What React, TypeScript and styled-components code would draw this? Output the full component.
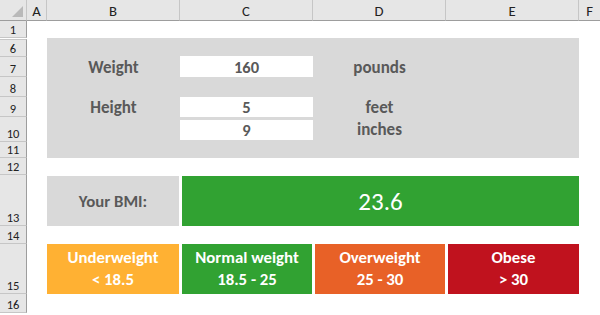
import React from "react";
import styled, { createGlobalStyle } from "styled-components";

const GlobalStyle = createGlobalStyle`
  html, body {
    margin: 0;
    padding: 0;
    background: #ffffff;
  }
  body {
    font-family: "Carlito", "Lato", "Liberation Sans", sans-serif;
  }
`;

const ROWS = [21, 17, 19, 20, 20, 20, 25, 16, 17, 51, 18, 50, 19];

const Sheet = styled.div`
  display: grid;
  grid-template-columns: 27px 20px 133px 133px 133px 133px 1fr;
  grid-template-rows: ${ROWS.map((r) => `${r}px`).join(" ")} 1fr;
  width: 600px;
  height: 315px;
  overflow: hidden;
  background: #ffffff;
`;

const Corner = styled.div`
  position: relative;
  grid-column: 1;
  grid-row: 1;
  background: #e6e6e6;
  border-right: 1px solid #c6c6c6;
  border-bottom: 1px solid #9d9d9d;

  &::after {
    content: "";
    position: absolute;
    right: 3px;
    bottom: 3px;
    width: 0;
    height: 0;
    border-left: 11px solid transparent;
    border-bottom: 11px solid #b9b9b9;
  }
`;

const ColHead = styled.div<{ $col: number; $last?: boolean }>`
  grid-column: ${(p) => p.$col};
  grid-row: 1;
  display: flex;
  align-items: center;
  justify-content: center;
  background: #e6e6e6;
  border-right: ${(p) => (p.$last ? "none" : "1px solid #c6c6c6")};
  border-bottom: 1px solid #9d9d9d;
  font-size: 14.7px;
  color: #222222;
  padding-top: 1px;
`;

const RowHead = styled.div<{ $row: number; $hidden?: boolean }>`
  grid-column: 1;
  grid-row: ${(p) => p.$row};
  display: flex;
  align-items: flex-end;
  justify-content: center;
  background: #e6e6e6;
  border-right: 1px solid #9d9d9d;
  border-bottom: 1px solid #c6c6c6;
  border-top: ${(p) => (p.$hidden ? "1px solid #c6c6c6" : "none")};
  margin-top: ${(p) => (p.$hidden ? "1px" : "0")};
  font-size: 12.5px;
  line-height: 15px;
  color: #222222;
`;

const InputPanel = styled.div`
  grid-column: 3 / 7;
  grid-row: 3 / 9;
  display: grid;
  grid-template-columns: repeat(4, 133px);
  grid-template-rows: 19px 20px 20px 20px 25px 16px;
  background: #d9d9d9;
`;

const Label = styled.div<{ $col: number; $row: number }>`
  grid-column: ${(p) => p.$col};
  grid-row: ${(p) => p.$row};
  display: flex;
  align-items: center;
  justify-content: center;
  font-size: 17px;
  font-weight: 700;
  color: #595959;
`;

const ValueBox = styled.div<{ $row: number; $top?: number; $bottom?: number }>`
  grid-column: 2;
  grid-row: ${(p) => p.$row};
  margin: ${(p) => `${p.$top ?? 0}px 0 ${p.$bottom ?? 0}px`};
  display: flex;
  align-items: center;
  justify-content: center;
  background: #ffffff;
  font-size: 16.5px;
  font-weight: 700;
  color: #595959;
`;

const ResultRow = styled.div`
  grid-column: 3 / 7;
  grid-row: 10;
  display: grid;
  grid-template-columns: 132px 1fr;
  column-gap: 3px;
  padding: 1px 0 0;
`;

const ResultLabel = styled.div`
  display: flex;
  align-items: center;
  justify-content: center;
  background: #d9d9d9;
  font-size: 16.8px;
  font-weight: 700;
  color: #595959;
`;

const ResultValue = styled.div`
  display: flex;
  align-items: center;
  justify-content: center;
  background: #31a232;
  font-size: 25px;
  color: #ffffff;
`;

const Scale = styled.div`
  grid-column: 3 / 7;
  grid-row: 12;
  display: grid;
  grid-template-columns: 132px 130px 130px 1fr;
  column-gap: 3px;
`;

const Category = styled.div<{ $bg: string }>`
  display: flex;
  flex-direction: column;
  align-items: center;
  justify-content: center;
  background: ${(p) => p.$bg};
  color: #ffffff;
  font-size: 16.8px;
  font-weight: 700;
  line-height: 22px;
`;

const columns = ["A", "B", "C", "D", "E", "F"];
const rowLabels = ["1", "6", "7", "8", "9", "10", "11", "12", "13", "14", "15", "16"];

const categories = [
  { name: "Underweight", range: "< 18.5", bg: "#ffb133" },
  { name: "Normal weight", range: "18.5 - 25", bg: "#31a232" },
  { name: "Overweight", range: "25 - 30", bg: "#e86127" },
  { name: "Obese", range: "> 30", bg: "#c0121e" },
];

export default function App() {
  return (
    <>
      <GlobalStyle />
      <Sheet>
        <Corner />
        {columns.map((c, i) => (
          <ColHead key={c} $col={i + 2} $last={i === columns.length - 1}>
            {c}
          </ColHead>
        ))}
        {rowLabels.map((r, i) => (
          <RowHead key={r} $row={i + 2} $hidden={r === "6"}>
            {r}
          </RowHead>
        ))}

        <InputPanel>
          <Label $col={1} $row={2}>Weight</Label>
          <ValueBox $row={2} $top={-1}>160</ValueBox>
          <Label $col={3} $row={2}>pounds</Label>

          <Label $col={1} $row={4}>Height</Label>
          <ValueBox $row={4}>5</ValueBox>
          <Label $col={3} $row={4}>feet</Label>

          <ValueBox $row={5} $top={3} $bottom={2}>9</ValueBox>
          <Label $col={3} $row={5}>inches</Label>
        </InputPanel>

        <ResultRow>
          <ResultLabel>Your BMI:</ResultLabel>
          <ResultValue>23.6</ResultValue>
        </ResultRow>

        <Scale>
          {categories.map((c) => (
            <Category key={c.name} $bg={c.bg}>
              <span>{c.name}</span>
              <span>{c.range}</span>
            </Category>
          ))}
        </Scale>
      </Sheet>
    </>
  );
}
